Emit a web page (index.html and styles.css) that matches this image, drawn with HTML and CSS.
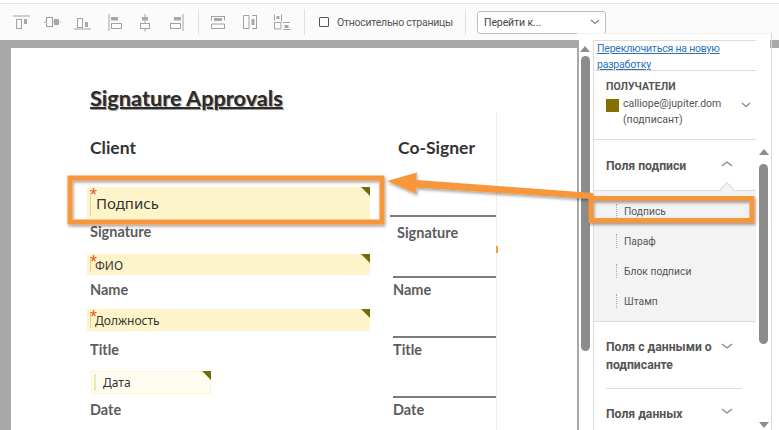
FILE: index.html
```html
<!DOCTYPE html>
<html lang="ru">
<head>
<meta charset="utf-8">
<title>Signature Approvals</title>
<link rel="stylesheet" href="styles.css">
</head>
<body>
<div class="app">
  <header class="toolbar">
    <div class="tool-group">
      <span class="tool"><svg class="ico" viewBox="0 0 24 24"><path d="M4 6h17"/><rect x="7.5" y="9.5" width="5" height="9"/><rect class="fill" x="15" y="9" width="3" height="5"/></svg></span>
      <span class="tool"><svg class="ico" viewBox="0 0 24 24"><path d="M4 12h2M13 12h1M20 12h1"/><rect x="6.5" y="7.5" width="6" height="9"/><rect class="fill" x="14" y="9" width="5" height="6"/></svg></span>
      <span class="tool"><svg class="ico" viewBox="0 0 24 24"><path d="M3 19h17"/><rect x="6.5" y="8.5" width="5" height="9"/><rect class="fill" x="14" y="12" width="3" height="5"/></svg></span>
      <span class="tool"><svg class="ico" viewBox="0 0 24 24"><path d="M7 4v17"/><rect class="fill" x="9" y="7" width="7" height="3.500"/><rect x="9.500" y="13.500" width="10" height="5"/></svg></span>
      <span class="tool"><svg class="ico" viewBox="0 0 24 24"><path d="M12 4v3M12 10.500v3M12 18.500v3"/><rect class="fill" x="9" y="7" width="6" height="3.500"/><rect x="7.500" y="13.500" width="9" height="5"/></svg></span>
      <span class="tool"><svg class="ico" viewBox="0 0 24 24"><path d="M19 4v17"/><rect class="fill" x="10" y="7" width="7" height="3.500"/><rect x="6.500" y="13.500" width="10" height="5"/></svg></span>
    </div>
    <span class="tool-sep"></span>
    <div class="tool-group tool-group-wide">
      <span class="tool"><svg class="ico" viewBox="0 0 24 24"><path d="M5 6.500h14M5 18.500h14M5.500 6.500v4M18.500 6.500v4M5.500 14v4.500M18.500 14v4.500M5.500 14h13"/><rect class="fill" x="8" y="8" width="8" height="3"/></svg></span>
      <span class="tool"><svg class="ico" viewBox="0 0 24 24"><path d="M5.500 5.500h5.500v13H5.500zM18.500 5v14M14 5.500h4.500M14 18.500h4.500"/><rect class="fill" x="13.500" y="9" width="3" height="6"/></svg></span>
      <span class="tool"><svg class="ico" viewBox="0 0 24 24"><path d="M11.500 4.500v7M4.500 12.500h6.500v6.500H4.500zM13 12.500h7M13 19.500h7M4.500 4.500v6"/><rect class="fill" x="6.500" y="6" width="3" height="3"/><rect class="fill" x="14.500" y="15" width="4" height="3"/></svg></span>
    </div>
    <span class="tool-sep tool-sep-b"></span>
    <label class="relative-check"><span class="checkbox"></span>Относительно страницы</label>
    <span class="tool-sep tool-sep-c"></span>
    <div class="goto">Перейти к...<svg class="chev goto-chev" viewBox="0 0 12 8"><path d="M2 2l4 3.500L10 2"/></svg></div>
  </header>

  <main class="workspace">
    <section class="canvas">
      <article class="doc">
        <h1 class="doc-title">Signature Approvals</h1>
        <div class="doc-cols">
          <div class="col-left">
            <h2 class="signer">Client</h2>
            <div class="field field-sig"><span class="req">*</span><span class="bar"></span><span class="val">Подпись</span></div>
            <div class="doc-label">Signature</div>
            <div class="field field-name"><span class="req">*</span><span class="bar"></span><span class="val">ФИО</span></div>
            <div class="doc-label">Name</div>
            <div class="field field-title"><span class="req">*</span><span class="bar"></span><span class="val">Должность</span></div>
            <div class="doc-label">Title</div>
            <div class="field field-date"><span class="bar"></span><span class="val">Дата</span></div>
            <div class="doc-label">Date</div>
          </div>
          <div class="col-right">
            <h2 class="signer signer-co">Co-Signer</h2>
            <div class="rule rule-first"></div>
            <div class="doc-label label-first">Signature</div>
            <div class="rule rule-second"></div>
            <div class="doc-label label-r">Name</div>
            <div class="rule"></div>
            <div class="doc-label label-r">Title</div>
            <div class="rule"></div>
            <div class="doc-label label-r">Date</div>
            <span class="tick"></span>
          </div>
        </div>
      </article>
    </section>

    <aside class="side">
      <div class="scroll scroll-a">
        <span class="arrow-up"></span><span class="thumb"></span>
      </div>
      <div class="panel">
        <div class="switch"><a href="#">Переключиться на новую разработку</a></div>
        <div class="recipients">
          <div class="rec-head">ПОЛУЧАТЕЛИ</div>
          <div class="rec-row">
            <span class="swatch"></span>
            <span class="rec-text">calliope@jupiter.dom<br>(подписант)</span>
            <svg class="chev rec-chev" viewBox="0 0 12 8"><path d="M2 2l4 3.500L10 2"/></svg>
          </div>
        </div>
        <div class="acc-head acc-open">
          <span>Поля подписи</span>
          <svg class="chev acc-chev" viewBox="0 0 12 8"><path d="M1 6l5-4 5 4"/></svg>
          <span class="notch"></span>
        </div>
        <ul class="acc-list">
          <li><span class="grip"></span>Подпись</li>
          <li><span class="grip"></span>Параф</li>
          <li><span class="grip"></span>Блок подписи</li>
          <li><span class="grip"></span>Штамп</li>
        </ul>
        <div class="acc-head acc-two">
          <span>Поля с данными о подписанте</span>
          <svg class="chev acc-chev" viewBox="0 0 12 8"><path d="M1 2l5 4 5-4"/></svg>
        </div>
        <div class="acc-head acc-last">
          <span>Поля данных</span>
          <svg class="chev acc-chev" viewBox="0 0 12 8"><path d="M1 2l5 4 5-4"/></svg>
        </div>
      </div>
      <div class="scroll scroll-b">
        <span class="arrow-up"></span><span class="thumb"></span><span class="arrow-down"></span>
      </div>
    </aside>
    <div class="rail"></div>
  </main>

  <svg class="callouts" viewBox="0 0 779 430">
    <defs>
      <filter id="soft" x="-5%" y="-20%" width="110%" height="150%"><feDropShadow dx="1" dy="2" stdDeviation="1.500" flood-color="#000" flood-opacity=".35"/></filter>
    </defs>
    <g filter="url(#soft)">
      <rect class="mark" x="70" y="178" width="312" height="44"/>
      <rect class="mark" x="591" y="198.500" width="161" height="22"/>
      <path class="arrow" d="M387 181L417 172.500L416 180L593 193L593 199L416 187.500L417 194Z"/>
    </g>
  </svg>
</div>
</body>
</html>
```

FILE: styles.css
```css
* { box-sizing: border-box; }
html, body { margin: 0; padding: 0; }
body { width: 779px; height: 430px; overflow: hidden; background: #fff; font-family: Roboto, "Noto Sans", sans-serif; }
h1, h2, ul { margin: 0; padding: 0; }

.app { position: relative; width: 779px; height: 430px; display: flex; flex-direction: column; }

/* Toolbar */
.toolbar { flex: none; display: flex; align-items: center; padding: 0 0 0 5px; background: #fbfbfb; border-top: 1px solid #e6e6e6; margin-top: 3px; height: 37px; }
.tool-group { display: flex; }
.tool { width: 31px; height: 30px; display: flex; align-items: center; justify-content: center; }
.tool-group-wide .tool { width: 32px; }
.tool-group-wide { margin-left: 3px; }
.ico { width: 24px; height: 24px; fill: none; stroke: #a2a2a2; stroke-width: 1; }
.ico .fill { fill: #a8a8a8; stroke: none; }
.tool-sep { width: 1px; height: 26px; background: #e0e0e0; margin-left: 7px; }
.tool-sep-b { margin-left: 6px; }
.tool-sep-c { margin-left: 13px; }
.relative-check { display: flex; align-items: center; margin-left: 14px; font-size: 10.500px; letter-spacing: -.25px; color: #555; white-space: nowrap; width: 133px; }
.checkbox { width: 10px; height: 10px; border: 1.500px solid #555; border-radius: 1px; margin-right: 8px; flex: none; }
.goto { width: 129px; height: 23px; margin-left: 11px; border: 1px solid #bdbdbd; border-radius: 3px; background: #fff; font-size: 10.500px; letter-spacing: -.1px; color: #444; display: flex; align-items: center; justify-content: space-between; padding: 0 3px 0 6px; }
.chev { fill: none; stroke: #808080; stroke-width: 1.100; }
.goto-chev { width: 12px; height: 8px; margin-right: 1px; }

/* Workspace */
.workspace { flex: 1; display: flex; min-height: 0; }
.canvas { width: 577px; flex: none; background: #a8a8a8; padding: 8px 0 0 11px; overflow: hidden; }
.doc { height: 100%; background: #fff; padding: 36px 0 0 79px; font-family: Lato, "Liberation Sans", sans-serif; position: relative; }
.doc-title { font-size: 21.700px; line-height: 28px; font-weight: 700; color: #2b2b2b; text-decoration: underline; text-decoration-thickness: 2px; text-shadow: 1px 1px 1px rgba(0,0,0,.4); }
.doc-cols { display: flex; }
.col-left { width: 303px; padding-top: 24px; margin-left: -3px; }
.col-right { width: 107px; height: 320px; padding-top: 24px; border-right: 1px solid #eee; position: relative; }
.signer { font-size: 17.500px; line-height: 24px; font-weight: 700; color: #333; padding-left: 3px; }
.signer-co { padding-left: 8px; }
.doc-label { font-size: 14.500px; line-height: 20px; font-weight: 700; color: #5c5c5c; padding-left: 3px; }
.label-first { margin-top: 6px; padding-left: 7px; }
.label-r { margin-top: 2px; }
.rule { height: 2px; background: #7a7a7a; margin: 36px 0 0 3px; }
.rule-first { margin: 55px 0 0; }
.rule-second { margin-top: 33px; }
.tick { position: absolute; right: -2px; top: 134px; width: 2px; height: 7px; background: #f0a040; }

.field { position: relative; background: #fdf5c9; display: flex; align-items: center; color: #333; width: 283px; }
.field::after { content: ""; position: absolute; top: 0; right: 0; border-top: 9px solid #6f6d0a; border-left: 9px solid transparent; }
.bar { width: 1px; align-self: stretch; margin: 3px 4px 3px 3px; background: #e0cfa0; flex: none; }
.val { font-family: "Noto Sans", "Open Sans", sans-serif; font-size: 12px; line-height: 16px; }
.req { position: absolute; left: 3px; top: -1px; color: #e2582a; font-size: 18px; line-height: 18px; font-family: "Liberation Sans", sans-serif; }
.field-sig { height: 32px; margin: 27px 0 3px; }
.field-sig .val { font-size: 15px; margin-top: 0; margin-left: 1px; }
.field-name { height: 21px; margin: 12px 0 5px; }
.field-name .val { margin-top: 2px; }
.field-title { height: 22px; margin: 9px 0 9px; }
.field-title .val { margin-top: 2px; }
.field-date { height: 23px; width: 120px; margin: 11px 0 6px 4px; background: #fffdf0; box-shadow: inset 0 0 0 1px #fbf5d5; }
.field-date .bar { margin-right: 7px; width: 2px; background: #f3e7b0; }

/* Sidebar */
.side { width: 193px; flex: none; display: flex; background: #fff; margin-top: -7px; position: relative; z-index: 1; height: 397px; padding-top: 7px; box-shadow: inset 0 1px 0 #f0f0f0; }
.scroll { position: relative; flex: none; }
.scroll-a { width: 16px; border-left: 2px solid #a8a8a8; }
.scroll-b { width: 15px; margin-left: 1px; border-right: 1px solid #d8d8d8; margin-top: -7px; }
.thumb { position: absolute; background: #8c8c8c; border-radius: 5px; }
.scroll-a .thumb { left: 2px; top: 16px; width: 9px; height: 295px; }
.scroll-b .thumb { left: 2px; top: 131px; width: 9px; height: 180px; }
.arrow-up, .arrow-down { position: absolute; width: 0; height: 0; border-left: 5px solid transparent; border-right: 5px solid transparent; }
.arrow-up { border-bottom: 6px solid #8c8c8c; }
.arrow-down { border-top: 6px solid #8c8c8c; left: 2px; top: 389px; }
.scroll-a .arrow-up { left: 1px; top: 6px; }
.scroll-b .arrow-up { left: 2px; top: 116px; }

.panel { width: 163px; flex: none; border-left: 1px solid #ddd; border-top: 1px solid #ddd; color: #555; }
.switch { height: 30px; padding: 0 0 0 3px; border-bottom: 1px solid #ddd; font-size: 10.500px; letter-spacing: -.2px; line-height: 16px; }
.switch a { color: #2c72b8; text-decoration: underline; }
.recipients { height: 69px; padding: 8px 0 0 12px; border-bottom: 1px solid #ddd; }
.rec-head { font-size: 10.500px; font-weight: 700; line-height: 16px; color: #555; }
.rec-row { display: flex; margin-top: 1px; position: relative; }
.swatch { width: 13px; height: 13px; background: #857000; flex: none; margin-top: 3px; margin-right: 4px; }
.rec-text { font-size: 10.500px; line-height: 16px; white-space: nowrap; color: #555; }
.rec-chev { width: 12px; height: 8px; position: absolute; left: 134px; top: 5px; }
.acc-head { position: relative; padding-left: 12px; font-size: 12.200px; font-weight: 700; line-height: 18px; color: #555; }
.acc-chev { position: absolute; left: 127px; width: 12px; height: 8px; }
.acc-open { height: 50px; padding-top: 17px; }
.acc-open .acc-chev { top: 20px; }
.notch { position: absolute; left: 128px; top: 44px; width: 10px; height: 10px; background: #f3f3f3; border-left: 1px solid #ddd; border-top: 1px solid #ddd; transform: rotate(45deg); }
.acc-list { list-style: none; height: 132px; background: #f3f3f3; border-top: 1px solid #ddd; border-bottom: 1px solid #ddd; padding-top: 5px; }
.acc-list li { height: 30px; display: flex; align-items: center; font-size: 10.300px; color: #555; padding-left: 22px; }
.grip { width: 1px; height: 14px; border-left: 1px dotted #aaa; margin-right: 7px; }
.acc-two { height: 67px; margin-right: 14px; padding-top: 16px; }
.acc-two span { display: block; width: 118px; }
.acc-two .acc-chev { top: 20px; }
.acc-two::after { content: ""; position: absolute; left: 12px; right: 0; bottom: 0; height: 1px; background: #ddd; }
.acc-last { padding-top: 16px; }
.acc-last .acc-chev { top: 18px; }

.rail { flex: 1; background: #fff; border-top: 8px solid #a8a8a8; }

/* Callouts */
.callouts { position: absolute; left: 0; top: 0; width: 779px; height: 430px; pointer-events: none; z-index: 2; }
.mark { fill: none; stroke: #f7963a; stroke-width: 5; }
.arrow { fill: #f7963a; }
```
